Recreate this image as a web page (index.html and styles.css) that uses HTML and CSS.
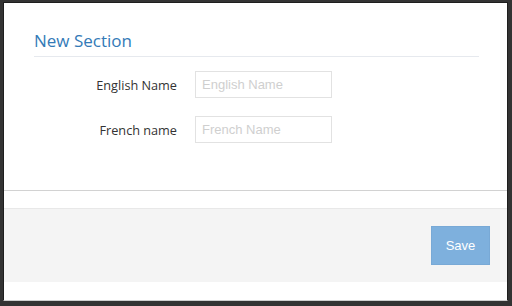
FILE: index.html
```html
<!DOCTYPE html>
<html lang="en">
<head>
    <meta charset="UTF-8">
    <meta name="viewport" content="width=device-width, initial-scale=1.0">
    <title>New Section</title>
    <link rel="stylesheet" href="styles.css">
</head>
<body>
    <div class="modal">
        <div class="modal-header">
            <h2>New Section</h2>
        </div>
        <form class="modal-body" id="sectionForm">
            <label for="englishName">English Name</label>
            <input type="text" id="englishName" name="englishName" placeholder="English Name">
            <label for="frenchName">French name</label>
            <input type="text" id="frenchName" name="frenchName" placeholder="French Name">
        </form>
        <div class="modal-footer">
            <button type="button" id="saveButton">Save</button>
        </div>
    </div>
</body>
</html>
```

FILE: styles.css
```css
html, body {
    margin: 0;
    padding: 0;
    height: 100%;
}
body {
    font-family: 'Open Sans', 'Noto Sans', sans-serif;
    background-color: #333333;
    padding: 2px 0 0 3px;
    box-sizing: border-box;
}
.modal {
    width: 503px;
    background-color: #ffffff;
    border: 1px solid #1e1e1e;
    border-bottom: 1px solid #cfcfcf;
}
.modal-header {
    padding: 27px 28px 0 30px;
}
h2 {
    margin: 0;
    padding-bottom: 4px;
    font-size: 17px;
    line-height: 22px;
    font-weight: normal;
    color: #337ab7;
    border-bottom: 1px solid #e6e9ee;
}
.modal-body {
    display: grid;
    grid-template-columns: 143px 137px;
    column-gap: 18px;
    row-gap: 18px;
    align-items: center;
    padding: 14px 0 47px 30px;
    border-bottom: 1px solid #d2d2d2;
}
label {
    text-align: right;
    font-size: 12.7px;
    color: #333333;
}
input[type="text"] {
    height: 27px;
    padding: 0 6px;
    border: 1px solid #e2e2e2;
    border-radius: 0;
    box-sizing: border-box;
    font-family: 'Liberation Sans', Arial, sans-serif;
    font-size: 13px;
    color: #555555;
    outline: none;
}
input::placeholder {
    color: #cfcfcf;
}
.modal-footer {
    display: flex;
    justify-content: flex-end;
    margin: 17px 0 18px;
    padding: 17px 17px 17px 0;
    background-color: #f4f4f4;
    border-top: 1px solid #e8e8e8;
}
button[type="button"] {
    width: 59px;
    height: 39px;
    padding: 0;
    background-color: #7eb0dd;
    color: #ffffff;
    border: 1px solid #78a9d6;
    border-radius: 0;
    font-family: 'Liberation Sans', Arial, sans-serif;
    font-size: 13px;
    cursor: pointer;
}
```
